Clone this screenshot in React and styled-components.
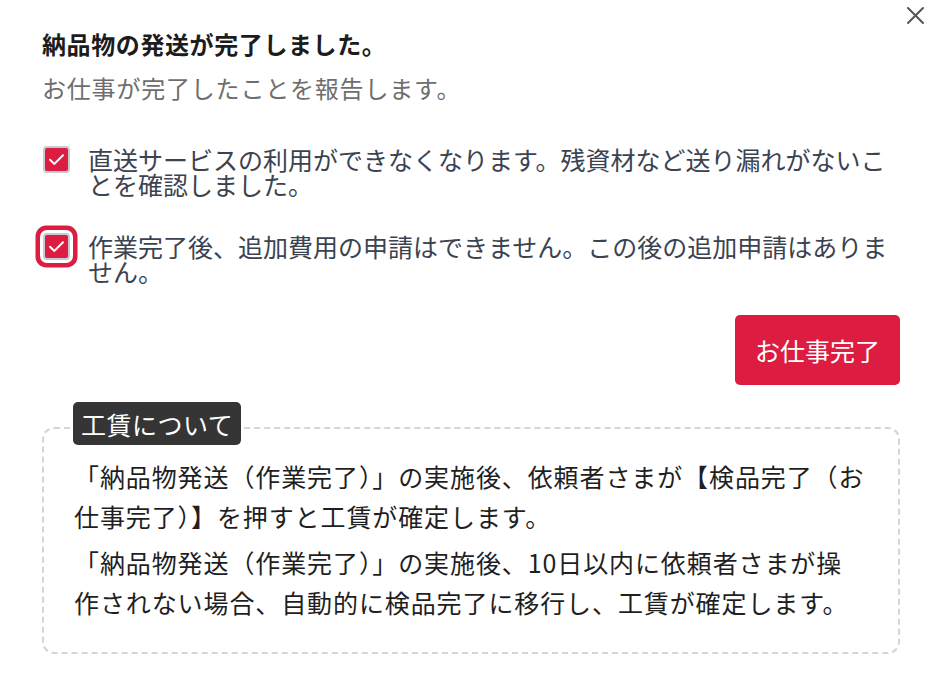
import React from "react";
import styled, { createGlobalStyle } from "styled-components";

const Global = createGlobalStyle`
  html, body { margin: 0; padding: 0; background: #ffffff; }
  body { font-family: "Noto Sans CJK JP", "Noto Sans", sans-serif; }
  * { box-sizing: border-box; }
`;

const Modal = styled.div`
  position: relative;
  width: 938px;
  min-height: 686px;
  padding: 28px 38px 0 42px;
  display: flex;
  flex-direction: column;
`;

const CloseButton = styled.button`
  position: absolute;
  top: 5px;
  right: 12px;
  width: 21px;
  height: 21px;
  padding: 0;
  border: 0;
  background: transparent;
  display: flex;
  align-items: center;
  justify-content: center;
`;

const Title = styled.h1`
  margin: 0;
  font-size: 24px;
  line-height: 32px;
  letter-spacing: 0.6px;
  font-weight: 700;
  color: #1c1c1c;
`;

const Subtitle = styled.p`
  margin: 12px 0 0;
  font-size: 24px;
  line-height: 32px;
  letter-spacing: 0.8px;
  color: #6e6e6e;
`;

const CheckList = styled.div`
  margin-top: 43px;
  display: flex;
  flex-direction: column;
  gap: 37px;
`;

const CheckRow = styled.label`
  display: flex;
  align-items: flex-start;
  gap: 18px;
`;

const Box = styled.span`
  flex: 0 0 27px;
  width: 27px;
  height: 27px;
  margin-top: -1px;
  margin-left: 1px;
  border-radius: 4px;
  border: 2px solid #c5c9d0;
  background: #dc1c40;
  display: flex;
  align-items: center;
  justify-content: center;
  box-shadow: ${(p) =>
    p.$focused ? "0 0 0 3px #ffffff, 0 0 0 7.5px #dc1c40" : "none"};
`;

const CheckText = styled.span`
  font-size: 25px;
  line-height: 25px;
  color: #3b4350;
`;

const Actions = styled.div`
  margin-top: 31px;
  display: flex;
  justify-content: flex-end;
`;

const PrimaryButton = styled.button`
  width: 165px;
  height: 70px;
  border: 0;
  border-radius: 5px;
  background: #dc1c40;
  color: #ffffff;
  font-family: inherit;
  font-size: 25px;
  padding: 0;
`;

const FeeBox = styled.section`
  position: relative;
  margin-top: 42px;
  border: 2px dashed #d2d5da;
  border-radius: 12px;
  padding: 27px 20px 30px 30px;
`;

const FeeLabel = styled.div`
  position: absolute;
  top: -27px;
  left: 29px;
  height: 43px;
  padding: 0 8px;
  border-radius: 5px;
  background: #353535;
  color: #ffffff;
  font-size: 25px;
  letter-spacing: 0.5px;
  display: flex;
  align-items: center;
`;

const FeeText = styled.p`
  margin: 0;
  font-size: 25px;
  line-height: 40px;
  letter-spacing: 0.9px;
  color: #1f1f1f;
  & + & {
    margin-top: 6px;
  }
`;

const Check = () => (
  <svg width="19" height="19" viewBox="0 0 19 19" fill="none">
    <path
      d="M3 9.8 L7.4 13.9 L16 5.2"
      stroke="#ffffff"
      strokeWidth="2"
      strokeLinecap="round"
      strokeLinejoin="round"
    />
  </svg>
);

const CloseIcon = () => (
  <svg width="19" height="19" viewBox="0 0 19 19" fill="none">
    <path
      d="M2 2 L17 17 M17 2 L2 17"
      stroke="#555555"
      strokeWidth="2"
      strokeLinecap="round"
    />
  </svg>
);

const items = [
  {
    text: "直送サービスの利用ができなくなります。残資材など送り漏れがないことを確認しました。",
    focused: false,
  },
  {
    text: "作業完了後、追加費用の申請はできません。この後の追加申請はありません。",
    focused: true,
  },
];

export default function App() {
  return (
    <>
      <Global />
      <Modal>
        <CloseButton aria-label="閉じる">
          <CloseIcon />
        </CloseButton>
        <Title>納品物の発送が完了しました。</Title>
        <Subtitle>お仕事が完了したことを報告します。</Subtitle>
        <CheckList>
          {items.map((it) => (
            <CheckRow key={it.text}>
              <Box $focused={it.focused}>
                <Check />
              </Box>
              <CheckText>{it.text}</CheckText>
            </CheckRow>
          ))}
        </CheckList>
        <Actions>
          <PrimaryButton>お仕事完了</PrimaryButton>
        </Actions>
        <FeeBox>
          <FeeLabel>工賃について</FeeLabel>
          <FeeText>
            「納品物発送（作業完了）」の実施後、依頼者さまが【検品完了（お仕事完了）】を押すと工賃が確定します。
          </FeeText>
          <FeeText>
            「納品物発送（作業完了）」の実施後、10日以内に依頼者さまが操
            <br />
            作されない場合、自動的に検品完了に移行し、工賃が確定します。
          </FeeText>
        </FeeBox>
      </Modal>
    </>
  );
}
